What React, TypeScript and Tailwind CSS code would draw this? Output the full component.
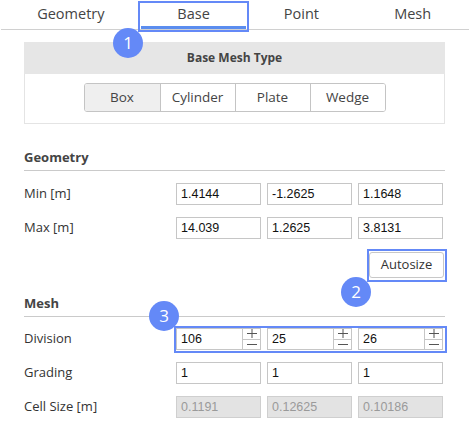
import React from "react";

const ui = { fontFamily: '"Open Sans", "Noto Sans", sans-serif' };
const mono = { fontFamily: '"Liberation Sans", Arial, sans-serif' };

const tabs = [
  { label: "Geometry", w: "w-[140px]" },
  { label: "Base", w: "w-[106px]", active: true },
  { label: "Point", w: "w-[110px]" },
  { label: "Mesh", w: "w-[113px]" },
];

const shapes = ["Box", "Cylinder", "Plate", "Wedge"];

function Badge({ n, className }: { n: number; className: string }) {
  return (
    <div
      className={`absolute w-[30px] h-[30px] rounded-full bg-[#6489f7] text-white text-[17px] flex items-center justify-center ${className}`}
      style={ui}
    >
      {n}
    </div>
  );
}

function Field({ value, disabled = false }: { value: string; disabled?: boolean }) {
  return (
    <div
      className={`w-[85px] h-[22px] border flex items-center px-[4px] text-[12.5px] ${
        disabled ? "bg-[#e3e3e3] border-[#cfcfcf] text-[#9a9a9a]" : "bg-white border-[#c6c6c6] text-[#111]"
      }`}
      style={mono}
    >
      {value}
    </div>
  );
}

function Spin({ value }: { value: string }) {
  return (
    <div className="w-[85px] h-[22px] border border-[#c6c6c6] bg-white flex text-[12.5px] text-[#111]" style={mono}>
      <div className="flex-1 flex items-center px-[4px]">{value}</div>
      <div className="w-[18px] border-l border-[#c6c6c6] flex flex-col">
        <div className="flex-1 flex items-center justify-center border-b border-[#c6c6c6]">
          <svg width="10" height="9" viewBox="0 0 10 9">
            <path d="M0 4.5h10M5 0v9" stroke="#555" strokeWidth="1" />
          </svg>
        </div>
        <div className="flex-1 flex items-center justify-center">
          <svg width="10" height="9" viewBox="0 0 10 9">
            <path d="M0 4.5h10" stroke="#555" strokeWidth="1" />
          </svg>
        </div>
      </div>
    </div>
  );
}

function Row({ label, children }: { label: string; children: React.ReactNode }) {
  return (
    <div className="flex items-center h-[22px]">
      <div className="w-[152px] text-[13px] text-[#333]" style={ui}>
        {label}
      </div>
      <div className="flex gap-[6px]">{children}</div>
    </div>
  );
}

function Heading({ text }: { text: string }) {
  return (
    <div className="h-[22px] border-b border-[#cacaca] flex items-start">
      <span className="text-[13px] font-bold text-[#444] leading-[16px]" style={ui}>
        {text}
      </span>
    </div>
  );
}

export default function App() {
  return (
    <div className="relative w-[469px] h-[438px] bg-white overflow-hidden" style={ui}>
      {/* tabs */}
      <div className="flex h-[30px] border-b border-[#d0d0d0] ml-[1px]">
        {tabs.map((t) => (
          <div
            key={t.label}
            className={`${t.w} h-full flex items-center justify-center text-[14.5px] text-[#444] ${
              t.active ? "border-b-[3px] border-[#5b8def] pt-[1px]" : "pb-[2px]"
            }`}
          >
            {t.label}
          </div>
        ))}
      </div>

      <div className="px-[24px]">
        {/* base mesh type */}
        <div className="mt-[12px]">
          <div className="h-[32px] bg-[#e6e6e6] flex items-center justify-center text-[12px] font-bold text-[#444]">
            Base Mesh Type
          </div>
          <div className="h-[50px] border border-t-0 border-[#e4e4e4] flex justify-center pt-[9px]">
            <div className="flex h-[29px] border border-[#c4c4c4] rounded-[3px] overflow-hidden">
              {shapes.map((s, i) => (
                <div
                  key={s}
                  className={`w-[75px] flex items-center justify-center text-[13.5px] text-[#444] ${
                    i > 0 ? "border-l border-[#c4c4c4]" : ""
                  } ${i === 0 ? "bg-[#efefef] w-[73px]" : "bg-white"}`}
                >
                  {s}
                </div>
              ))}
            </div>
          </div>
        </div>

        {/* geometry */}
        <div className="mt-[25px]">
          <Heading text="Geometry" />
          <div className="flex flex-col gap-[12px] mt-[12px]">
            <Row label="Min [m]">
              <Field value="1.4144" />
              <Field value="-1.2625" />
              <Field value="1.1648" />
            </Row>
            <Row label="Max [m]">
              <Field value="14.039" />
              <Field value="1.2625" />
              <Field value="3.8131" />
            </Row>
          </div>
          <div className="flex justify-end mt-[13px] pr-[1px]">
            <div className="w-[75px] h-[26px] border border-[#c8c8c8] rounded-[3px] flex items-center justify-center text-[13px] text-[#333]">
              Autosize
            </div>
          </div>
        </div>

        {/* mesh */}
        <div className="mt-[17px]">
          <Heading text="Mesh" />
          <div className="flex flex-col gap-[12px] mt-[11px]">
            <Row label="Division">
              <Spin value="106" />
              <Spin value="25" />
              <Spin value="26" />
            </Row>
            <Row label="Grading">
              <Field value="1" />
              <Field value="1" />
              <Field value="1" />
            </Row>
            <Row label="Cell Size [m]">
              <Field value="0.1191" disabled />
              <Field value="0.12625" disabled />
              <Field value="0.10186" disabled />
            </Row>
          </div>
        </div>
      </div>

      {/* highlight overlays */}
      <div className="absolute left-[138px] top-[1px] w-[111px] h-[31px] border-2 border-[#6489f7]" />
      <div className="absolute left-[367px] top-[249px] w-[80px] h-[33px] border-2 border-[#6489f7]" />
      <div className="absolute left-[174px] top-[326px] w-[273px] h-[27px] border-2 border-[#6489f7]" />

      <Badge n={1} className="left-[113px] top-[28px]" />
      <Badge n={2} className="left-[341px] top-[277px]" />
      <Badge n={3} className="left-[149px] top-[301px]" />
    </div>
  );
}
